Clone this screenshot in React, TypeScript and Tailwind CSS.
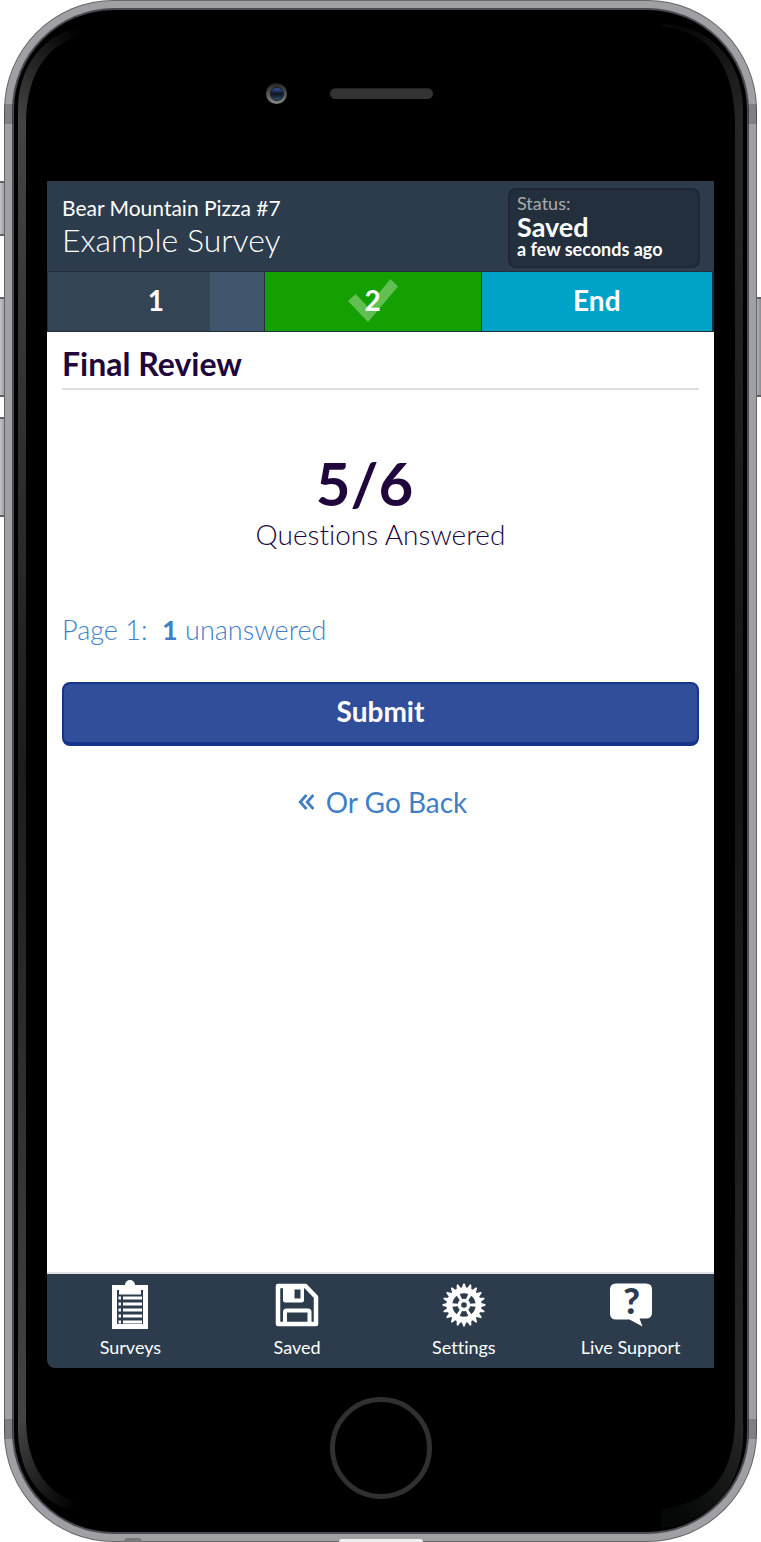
import type { ReactNode } from "react";

const TEETH = 20;
const gearPoints = Array.from({ length: TEETH * 4 }, (_, i) => {
  const tooth = Math.floor(i / 4);
  const part = i % 4;
  const angle = ((tooth + [-0.38, -0.1, 0.1, 0.38][part]) / TEETH) * Math.PI * 2 - Math.PI / 2;
  const radius = part === 0 || part === 3 ? 17.5 : 21.5;
  return `${(22 + radius * Math.cos(angle)).toFixed(2)},${(22 + radius * Math.sin(angle)).toFixed(2)}`;
}).join(" ");

function ClipboardIcon() {
  return (
    <svg aria-hidden="true" className="h-[50px] w-9" viewBox="0 0 36 50" fill="none">
      <path d="M2.5 7.500v39h31v-39z" stroke="#fff" strokeWidth="5" />
      <path
        fill="#fff"
        fillRule="evenodd"
        d="M7 14.500V10.500q0-1.500 3-1.500h3V5a5 5 0 0 1 10 0v4h3q3 0 3 1.500v4zM18 5.700a1.300 1.300 0 1 0 0 2.600 1.300 1.300 0 0 0 0-2.600z"
      />
      {[18, 24, 30, 36, 42].map((y) => (
        <path key={y} d={`M6.500 ${y}h2.500M11 ${y}h19`} stroke="#fff" strokeWidth="3" />
      ))}
    </svg>
  );
}

function FloppyIcon() {
  return (
    <svg aria-hidden="true" className="h-11 w-11" viewBox="0 0 44 44" fill="none" stroke="#fff">
      <path d="M3 3h27.500L41 14v27H3z" strokeWidth="4.500" strokeLinejoin="round" />
      <path
        d="M8 3h21v14q0 2.500-2.500 2.500H10.500Q8 19.500 8 17zM19.500 6.500v9h6v-9z"
        fill="#fff"
        fillRule="evenodd"
        stroke="none"
      />
      <path d="M10 41V29q0-1.500 1.500-1.500H33q1.500 0 1.500 1.500v12" strokeWidth="4" />
    </svg>
  );
}

function GearIcon() {
  return (
    <svg aria-hidden="true" className="h-11 w-11" viewBox="0 0 44 44">
      <polygon points={gearPoints} fill="#fff" />
      <circle cx="22" cy="22" r="2.800" fill="#2c3c4c" />
      {[0, 60, 120, 180, 240, 300].map((angle) => (
        <path
          key={angle}
          d="M20 16 17.700 11A12 12 0 0 1 26.300 11L24 16A6 6 0 0 0 20 16z"
          fill="#2c3c4c"
          transform={`rotate(${angle} 22 22)`}
        />
      ))}
    </svg>
  );
}

function SupportIcon() {
  return (
    <svg aria-hidden="true" className="h-11 w-11 overflow-visible" viewBox="0 0 44 44">
      <path d="M7 0.500h30q6 0 6 6v23q0 6-6 6h-6.500L33.500 43.500 20.500 36.500H7q-6 0-6-6v-24q0-6 6-6z" fill="#fff" />
      <text x="22.500" y="31" textAnchor="middle" fontFamily="Lato, sans-serif" fontWeight="900" fontSize="36" fill="#2c3c4c">
        ?
      </text>
    </svg>
  );
}

function NavLink({ label, children }: { label: string; children: ReactNode }) {
  return (
    <a href="#" className="flex flex-1 flex-col items-center text-lg leading-6 font-normal text-white">
      <span className="flex h-[52px] items-center">{children}</span>
      <span className="mt-1">{label}</span>
    </a>
  );
}

function SideButton({ className }: { className: string }) {
  return (
    <div
      className={`absolute w-[6px] border-y-2 border-[#606166] bg-linear-to-r from-[#c2c5ca] to-[#8c8d92] ${className}`}
    />
  );
}

function Bezel() {
  return (
    <div aria-hidden="true">
      <div className="absolute top-[104px] left-1 h-5 w-[9px] bg-black/20" />
      <div className="absolute top-[104px] right-1 h-5 w-[9px] bg-black/20" />
      <div className="absolute bottom-[103px] left-1 h-5 w-[9px] bg-black/20" />
      <div className="absolute right-1 bottom-[103px] h-5 w-[9px] bg-black/20" />
      <div className="absolute top-[120px] bottom-[120px] left-[18px] w-2 bg-linear-to-b from-[#444] via-[#1c1c1c] to-[#444]" />
      <div className="absolute top-[120px] right-[18px] bottom-[120px] w-2 bg-linear-to-b from-[#262626] via-[#141414] to-[#262626]" />
      <svg className="absolute top-0 left-0 h-[120px] w-[120px]" viewBox="0 0 120 120">
        <linearGradient id="shine-tl" x1="0" y1="1" x2="0.850" y2="0.200">
          <stop offset="0" stopColor="#444" />
          <stop offset="1" stopColor="#000" />
        </linearGradient>
        <path d="M18 120V108C19 60 50 25 102 24V31C55 36 28 63 26 120z" fill="url(#shine-tl)" />
      </svg>
      <svg className="absolute top-0 right-0 h-[120px] w-[120px]" viewBox="0 0 120 120">
        <linearGradient id="shine-tr" x1="1" y1="1" x2="0.150" y2="0.200">
          <stop offset="0" stopColor="#262626" />
          <stop offset="1" stopColor="#080808" />
        </linearGradient>
        <path d="M102 120V108C101 60 70 25 20 24V26C66 32 92 60 94 120z" fill="url(#shine-tr)" />
      </svg>
      <svg className="absolute bottom-0 left-0 h-[120px] w-[120px]" viewBox="0 0 120 120">
        <linearGradient id="shine-bl" x1="0" y1="0" x2="0.850" y2="0.750">
          <stop offset="0" stopColor="#444" />
          <stop offset="1" stopColor="#000" />
        </linearGradient>
        <path d="M18 0V12C20 60 50 94 100 92V86C56 82 28 55 26 0z" fill="url(#shine-bl)" />
      </svg>
      <svg className="absolute right-0 bottom-0 h-[120px] w-[120px]" viewBox="0 0 120 120">
        <linearGradient id="shine-br" x1="1" y1="0" x2="0.200" y2="0.850">
          <stop offset="0" stopColor="#262626" />
          <stop offset="1" stopColor="#060808" />
        </linearGradient>
        <path d="M102 0C106 68 66 101 20 106V87C66 82 92 58 94 0z" fill="url(#shine-br)" />
      </svg>
      <div className="absolute bottom-0 left-1/2 h-[3px] w-[84px] -translate-x-1/2 rounded-t-full bg-[#efefef]" />
      <div className="absolute bottom-0 left-[124px] h-1 w-[18px] rounded-t-full bg-[#77767b]" />
    </div>
  );
}

export default function App() {
  return (
    <div className="relative min-h-screen bg-white px-1 font-['Lato',sans-serif] [font-variant-ligatures:none]">
      <SideButton className="top-[181px] left-0 h-[55px]" />
      <SideButton className="top-[297px] left-0 h-[100px]" />
      <SideButton className="top-[417px] left-0 h-[100px]" />
      <SideButton className="top-[297px] right-0 h-[100px]" />
      <div className="relative flex min-h-screen rounded-[110px] bg-[#66656a] p-px">
        <div className="flex flex-1 rounded-[109px] bg-[#a09fa4] p-[7px]">
          <div className="flex flex-1 rounded-[102px] bg-[#4c4b53] p-[2px]">
            <div className="flex min-w-0 flex-1 flex-col rounded-[100px] bg-black px-[33px]">
              <div aria-hidden="true" className="flex h-[171px] items-center justify-center pr-[62px] pb-1">
                <div className="mr-[43px] flex size-[21px] items-center justify-center rounded-full bg-linear-to-b from-[#222] to-[#888]">
                  <div className="size-[14px] rounded-full border border-[#161a24] bg-linear-to-b from-[#3458a8] via-[#101420] to-[#2b5070]" />
                </div>
                <div className="h-[11px] w-[103px] rounded-full border-t border-[#222] bg-[#333]" />
              </div>

              <div className="flex flex-1 flex-col overflow-hidden rounded-bl-lg">
                <header className="flex h-[90px] items-center justify-between bg-[#2c3c4c] pr-[14px] pl-[15px] text-white">
                  <div>
                    <p className="text-[21px] leading-7">Bear Mountain Pizza #7</p>
                    <h1 className="text-[32px] leading-9 font-light">Example Survey</h1>
                  </div>
                  <div className="mt-1 h-20 w-[192px] rounded-lg border-2 border-[#1e2834] bg-[#242f3d] px-[7px] pt-[2px] whitespace-nowrap">
                    <p className="text-lg leading-[23px] text-[#a7acb1]">Status:</p>
                    <p className="text-[27px] leading-[23px] font-bold">Saved</p>
                    <p className="text-lg leading-[23px] font-bold">a few seconds ago</p>
                  </div>
                </header>

                <nav aria-label="Survey pages" className="flex h-[61px] gap-px border-y border-r-2 border-l border-[#232e3c] bg-[#232e3c] text-[28px] font-bold text-white">
                  <a href="#" className="flex basis-[32.5%] items-center justify-center bg-linear-to-r from-[#334454] from-75% to-[#40566c] to-75% pb-1">
                    1
                  </a>
                  <a href="#" className="relative flex basis-[32.5%] items-center justify-center bg-[#14a000] pb-1">
                    <svg aria-hidden="true" className="absolute top-[7px] left-1/2 h-[43px] w-[50px] -translate-x-1/2" viewBox="0 0 50 43">
                      <path d="M0 22 7.500 15 19.500 27.500 42.500 0 50 7.500 20 43z" fill="#fff" fillOpacity="0.330" />
                    </svg>
                    <span className="relative">2</span>
                  </a>
                  <a href="#" className="flex flex-1 items-center justify-center bg-[#00a3c7] pb-1">
                    End
                  </a>
                </nav>

                <main className="flex flex-1 flex-col bg-white px-[15px] text-[28px] text-[#20063b]">
                  <h2 className="border-b-2 border-[#dedede] pt-3 pb-1 text-[32px] leading-10 font-bold">Final Review</h2>
                  <div className="mt-[60px] text-center">
                    <p className="pr-8 text-6xl leading-[66px] font-bold">5/6</p>
                    <p className="leading-9 font-light">Questions Answered</p>
                  </div>
                  <a href="#" className="mt-15 self-start text-[27px] leading-9 font-light text-[#3f7fc6]">
                    Page 1:&nbsp; <strong className="font-bold">1</strong> unanswered
                  </a>
                  <button
                    type="button"
                    className="mt-[34px] h-16 rounded-lg border-2 border-b-4 border-[#16348c] bg-[#314e9b] pb-1 leading-8 font-bold text-white"
                  >
                    Submit
                  </button>
                  <a href="#" className="mt-[38px] flex items-center gap-3 self-center pl-1 leading-9 text-[#3f7fc6]">
                    <svg aria-hidden="true" className="h-4 w-4" viewBox="0 0 16 16" fill="none" stroke="currentColor" strokeWidth="2.800">
                      <path d="M8.500 1 2.200 8 8.500 15M15.500 1 9.200 8 15.500 15" />
                    </svg>
                    Or Go Back
                  </a>
                </main>

                <footer className="border-t-2 border-[#dfe2e5]">
                  <nav aria-label="Main" className="flex h-[94px] bg-[#2c3c4c] pt-[5px]">
                    <NavLink label="Surveys"><ClipboardIcon /></NavLink>
                    <NavLink label="Saved"><FloppyIcon /></NavLink>
                    <NavLink label="Settings"><GearIcon /></NavLink>
                    <NavLink label="Live Support"><SupportIcon /></NavLink>
                  </nav>
                </footer>
              </div>

              <div className="flex h-[164px] items-center justify-center pb-1">
                <button
                  type="button"
                  aria-label="Home"
                  className="size-[102px] rounded-full border-[5px] border-[#303030]"
                />
              </div>
            </div>
          </div>
        </div>
      </div>
      <Bezel />
    </div>
  );
}
